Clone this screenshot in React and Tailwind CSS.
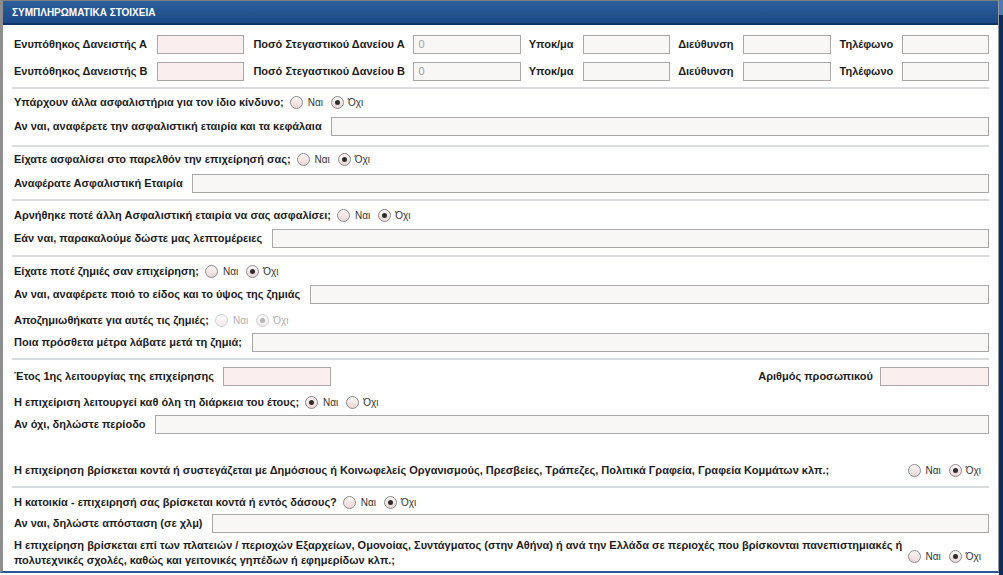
import React from 'react';

const font = { fontFamily: '"Liberation Sans", Arial, sans-serif' };

function Radio({ checked, disabled }) {
  return (
    <span
      className={`inline-flex items-center justify-center w-[13px] h-[13px] rounded-full border shrink-0 ${
        disabled
          ? 'border-[#cfcfcf] bg-linear-to-b from-[#fbfbfb] to-[#f0eaea]'
          : 'border-[#8d8d8d] bg-linear-to-b from-[#fdf7f7] to-[#ecd6d6]'
      }`}
    >
      {checked && (
        <span className={`w-[5px] h-[5px] rounded-full ${disabled ? 'bg-[#b5b5b5]' : 'bg-[#2e2e2e]'}`} />
      )}
    </span>
  );
}

function YesNo({ yes, disabled }) {
  const txt = disabled ? 'text-[#b0b0b0]' : 'text-[#333]';
  return (
    <span className="inline-flex items-center shrink-0">
      <Radio checked={yes} disabled={disabled} />
      <span className={`ml-[5px] text-[10px] ${txt}`}>Ναι</span>
      <span className="ml-[8px] inline-flex"><Radio checked={!yes} disabled={disabled} /></span>
      <span className={`ml-[4px] text-[10px] ${txt}`}>Όχι</span>
    </span>
  );
}

function Input({ pink, value, className = '' }) {
  return (
    <div
      className={`h-[19px] border border-[#a8a8a8] flex items-center px-[4px] text-[11px] text-[#a0a0a0] ${
        pink ? 'bg-[#fbeeee]' : 'bg-[#f8f7f5]'
      } ${className}`}
    >
      {value}
    </div>
  );
}

function Divider({ className }) {
  return <div className={`h-[2px] bg-[#d9dcdf] ${className}`} />;
}

function Label({ children, className = '' }) {
  return (
    <span className={`font-bold text-[11px] whitespace-nowrap shrink-0 text-[#1c1c1c] ${className}`}>
      {children}
    </span>
  );
}

function QuestionRow({ label, yes, disabled, className }) {
  return (
    <div className={`h-[19px] flex items-center ${className}`}>
      <Label>{label}</Label>
      <span className="ml-[6px] inline-flex">
        <YesNo yes={yes} disabled={disabled} />
      </span>
    </div>
  );
}

function FieldRow({ label, labelW, className }) {
  return (
    <div className={`h-[19px] flex items-center ${className}`}>
      <Label className={labelW}>{label}</Label>
      <Input className="flex-1" />
    </div>
  );
}

function LenderRow({ letter, className }) {
  return (
    <div className={`h-[19px] flex items-center ${className}`}>
      <Label className="w-[143px]">Ενυπόθηκος Δανειστής {letter}</Label>
      <Input pink className="w-[88px]" />
      <Label className="ml-[9px] w-[160px]">Ποσό Στεγαστικού Δανείου {letter}</Label>
      <Input value="0" className="w-[108px]" />
      <Label className="ml-[8px] w-[54px]">Υποκ/μα</Label>
      <Input className="w-[88px]" />
      <Label className="ml-[8px] w-[65px]">Διεύθυνση</Label>
      <Input className="w-[88px]" />
      <Label className="ml-[9px] w-[62px]">Τηλέφωνο</Label>
      <Input className="w-[88px]" />
    </div>
  );
}

export default function App() {
  return (
    <div className="w-[1003px] h-[575px] flex bg-white overflow-hidden" style={font}>
      <div className="w-[999px] h-[573px] flex flex-col border-t border-t-[#7d7d7d] border-l-[3px] border-l-[#8e8e8e] border-r border-r-[#9a9a9a] border-b-2 border-b-[#2a5796]">
        {/* Header */}
        <div className="h-[24px] shrink-0 flex items-center pl-[9px] bg-linear-to-b from-[#2d5f9c] to-[#1c4985] border-b-2 border-b-[#0f3467]">
          <span className="text-white font-bold text-[10px]">ΣΥΜΠΛΗΡΩΜΑΤΙΚΑ ΣΤΟΙΧΕΙΑ</span>
        </div>

        <div className="flex flex-col pl-[11px] pr-[9px]">
          <LenderRow letter="Α" className="mt-[10px]" />
          <LenderRow letter="Β" className="mt-[8px]" />
          <Divider className="mt-[6px] -ml-[2px]" />

          <QuestionRow label="Υπάρχουν άλλα ασφαλιστήρια για τον ίδιο κίνδυνο;" yes={false} className="mt-[4px]" />
          <FieldRow label="Αν ναι, αναφέρετε την ασφαλιστική εταιρία και τα κεφάλαια" labelW="w-[317px]" className="mt-[5px]" />
          <Divider className="mt-[9px] -ml-[2px]" />

          <QuestionRow label="Είχατε ασφαλίσει στο παρελθόν την επιχείρησή σας;" yes={false} className="mt-[3px]" />
          <FieldRow label="Αναφέρατε Ασφαλιστική Εταιρία" labelW="w-[178px]" className="mt-[5px]" />
          <Divider className="mt-[6px] -ml-[2px]" />

          <QuestionRow label="Αρνήθηκε ποτέ άλλη Ασφαλιστική εταιρία να σας ασφαλίσει;" yes={false} className="mt-[5px]" />
          <FieldRow label="Εάν ναι, παρακαλούμε δώστε μας λεπτομέρειες" labelW="w-[258px]" className="mt-[4px]" />
          <Divider className="mt-[7px] -ml-[2px]" />

          <QuestionRow label="Είχατε ποτέ ζημιές σαν επιχείρηση;" yes={false} className="mt-[5px]" />
          <FieldRow label="Αν ναι, αναφέρετε ποιό το είδος και το ύψος της ζημιάς" labelW="w-[296px]" className="mt-[4px]" />
          <QuestionRow label="Αποζημιωθήκατε για αυτές τις ζημιές;" yes={false} disabled className="mt-[7px]" />
          <FieldRow label="Ποια πρόσθετα μέτρα λάβατε μετά τη ζημιά;" labelW="w-[238px]" className="mt-[3px]" />
          <Divider className="mt-[6px] -ml-[2px]" />

          <div className="h-[19px] flex items-center mt-[7px]">
            <Label className="w-[209px]">Έτος 1ης λειτουργίας της επιχείρησης</Label>
            <Input pink className="w-[108px]" />
            <div className="flex-1" />
            <Label className="mr-[7px]">Αριθμός προσωπικού</Label>
            <Input pink className="w-[109px]" />
          </div>
          <QuestionRow label="Η επιχείριση λειτουργεί καθ όλη τη διάρκεια του έτους;" yes className="mt-[7px]" />
          <FieldRow label="Αν όχι, δηλώστε περίοδο" labelW="w-[141px]" className="mt-[3px]" />

          <div className="h-[19px] flex items-center mt-[27px]">
            <Label>
              Η επιχείρηση βρίσκεται κοντά ή συστεγάζεται με Δημόσιους ή Κοινωφελείς Οργανισμούς, Πρεσβείες, Τράπεζες, Πολιτικά Γραφεία, Γραφεία Κομμάτων κλπ.;
            </Label>
            <div className="flex-1" />
            <span className="mr-[8px] inline-flex">
              <YesNo yes={false} />
            </span>
          </div>
          <Divider className="mt-[6px] -ml-[2px]" />

          <QuestionRow label="Η κατοικία - επιχειρησή σας βρίσκεται κοντά ή εντός δάσους?" yes={false} className="mt-[5px]" />
          <FieldRow label="Αν ναι, δηλώστε απόσταση (σε χλμ)" labelW="w-[198px]" className="mt-[2px]" />

          <div className="flex items-center mt-[5px]">
            <Label className="leading-[15px]">
              Η επιχείρηση βρίσκεται επί των πλατειών / περιοχών Εξαρχείων, Ομονοίας, Συντάγματος (στην Αθήνα) ή ανά την Ελλάδα σε περιοχές που βρίσκονται πανεπιστημιακές ή
              <br />
              πολυτεχνικές σχολές, καθώς και γειτονικές γηπέδων ή εφημερίδων κλπ.;
            </Label>
            <div className="flex-1" />
            <span className="mr-[8px] mt-[6px] inline-flex">
              <YesNo yes={false} />
            </span>
          </div>
        </div>
      </div>
      <div className="w-[4px] flex flex-col">
        <div className="h-[15px] bg-[#4a7db8]" />
        <div className="flex-1 bg-[#0d2c5a]" />
      </div>
    </div>
  );
}
